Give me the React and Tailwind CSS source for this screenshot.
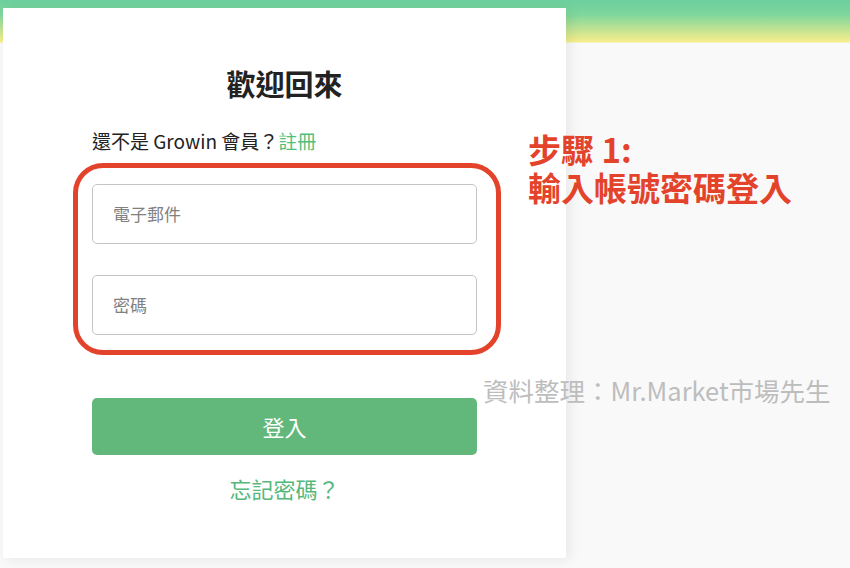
export default function App() {
  const font = { fontFamily: '"Noto Sans CJK TC", "Noto Sans", sans-serif' };

  return (
    <div
      className="relative min-h-[568px] w-full overflow-hidden bg-[linear-gradient(to_bottom,#6ccf9e_0px,#7dd69c_14px,#f7ee8b_42px,#f9f9f9_43px)]"
      style={font}
    >
      <div className="flex items-start gap-[30px] pt-[8px] pl-[3px]">
        {/* Login card */}
        <div className="relative w-[563px] h-[550px] shrink-0 bg-white shadow-[4px_2px_12px_rgba(0,0,0,0.07)] px-[89px] pt-[55px]">
          <h1 className="text-center text-[29px] leading-[40px] font-bold text-[#222]">歡迎回來</h1>

          <p className="mt-[24px] text-[19px] leading-[28px] text-[#222]">
            還不是 Growin 會員？<a className="text-[#4fbf7d]">註冊</a>
          </p>

          <div className="mt-[29px] h-[60px] rounded-[5px] border border-[#c4c4c4] flex items-center px-[20px]">
            <span className="text-[17px] text-[#808080]">電子郵件</span>
          </div>
          <div className="mt-[31px] h-[60px] rounded-[5px] border border-[#c4c4c4] flex items-center px-[20px]">
            <span className="text-[17px] text-[#808080]">密碼</span>
          </div>

          <button className="mt-[63px] w-full h-[57px] rounded-[5px] bg-[#62b87a] text-white text-[22px] flex items-center justify-center">
            登入
          </button>

          <p className="mt-[17px] text-center text-[22px] leading-[32px] text-[#55b87c]">忘記密碼？</p>

          {/* annotation frame */}
          <div className="absolute left-[70px] top-[155px] w-[428px] h-[192px] rounded-[30px] border-[5px] border-[#e4432b]"></div>
        </div>

        {/* Step annotation */}
        <div className="relative z-10 pt-[122px] -ml-[68px] text-[#e4432b] font-bold text-[33px] leading-[38px] whitespace-nowrap">
          <p>步驟 1:</p>
          <p>輸入帳號密碼登入</p>
        </div>
      </div>

      <p className="absolute left-[483px] top-[373px] text-[25.5px] leading-[34px] text-[#bdbdbd] whitespace-nowrap">
        資料整理：Mr.Market市場先生
      </p>
    </div>
  );
}
